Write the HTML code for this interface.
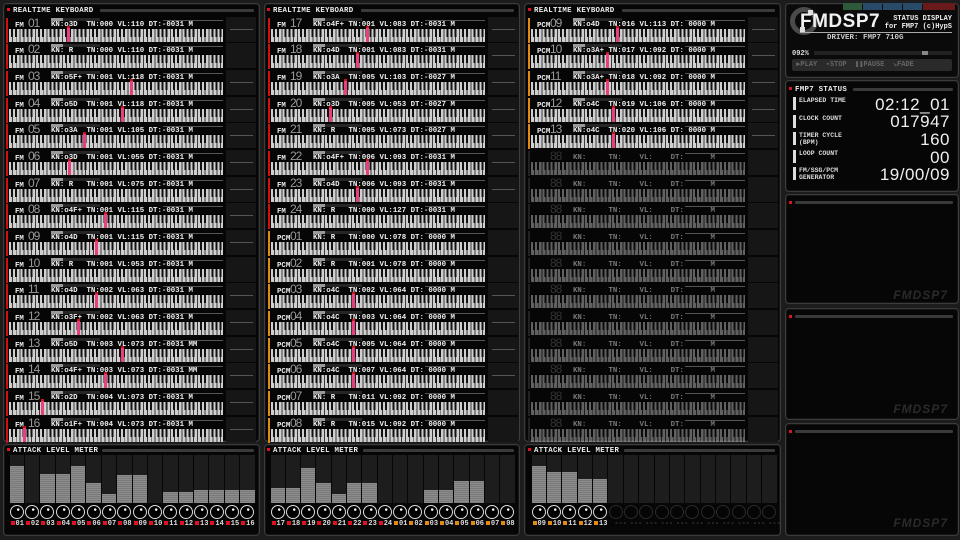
<!DOCTYPE html><html><head><meta charset="utf-8"><style>
*{margin:0;padding:0;box-sizing:border-box}
body{width:960px;height:540px;background:#1c1c1c;overflow:hidden;position:relative;font-family:"Liberation Mono",monospace;color:#eee}
.p{position:absolute;background:#060606;border:1px solid #3c3c3c;border-radius:4px;box-shadow:inset 0 0 0 1px #151515}
.tt{position:absolute;font:bold 7.4px "Liberation Mono",monospace;color:#eee;letter-spacing:.3px;white-space:nowrap}
.tt:before{content:"";display:inline-block;width:3px;height:3px;background:#e01020;margin-right:3px;vertical-align:1px}
.ln{position:absolute;height:3px;background:#3a3a3a;border-radius:1px}
.r{position:absolute;width:256px;height:26px}
.r .b{position:absolute;left:6px;top:1px;width:2px;height:25px;background:#d01010}
.r.p2 .b{background:#e08a10}
.r.d .b{background:#222}
.r .c{position:absolute;left:15px;top:5px;font:bold 7.4px "Liberation Mono",monospace;color:#eee}
.r .n{position:absolute;left:28px;top:-1px;font:12px "Liberation Sans",sans-serif;color:#999;letter-spacing:-1px}
.r .t{position:absolute;left:51px;top:4px;font:bold 7.4px/8px "Liberation Mono",monospace;color:#eee;white-space:pre}
.r .kb{position:absolute;left:9px;top:11px;width:214px;height:14px;background:
linear-gradient(#000,#000) 0 0/100% 1px no-repeat,
repeating-linear-gradient(90deg,transparent 0 2.2px,#111 2.2px 4.2px,transparent 4.2px 6px,#111 6px 8px,transparent 8px 13.6px,#111 13.6px 15.6px,transparent 15.6px 17.5px,#111 17.5px 19.5px,transparent 19.5px 21.3px,#111 21.3px 23.3px,transparent 23.3px 27px) 0 1px/100% 8px no-repeat,
repeating-linear-gradient(90deg,#cfcfcf 0 2.9px,#3a3a3a 2.9px 3.857px)}
.r.d .kb{opacity:.45}
.r.d .t,.r.d .c{color:#777}.r.d .n{color:#333}
.r .s{position:absolute;left:226px;top:0;width:30px;height:25px;background:#161616}
.r .s:after{content:"";position:absolute;left:4px;right:3px;top:12px;height:1px;background:#555}
.r.d .s:after,.r.x .s:after{display:none}
.r .m{position:absolute;left:51px;top:1px;width:49px;height:3px;background:#262626}
.r .m:before{content:"";position:absolute;left:0;top:0;width:12px;height:3px;background:#9a9a9a}
.r .lr{position:absolute;left:163px;top:3px;width:60px;height:1px;background:#555}
.r .k{position:absolute;top:9px;width:3px;height:16px;background:#e8407e;border-top:2px solid #d01010}
.am{position:absolute;display:flex;height:80px}
.am>div{flex:1;position:relative;margin:0 .5px}
.am .bb{position:absolute;left:0;right:0;top:0;height:48px;background:#1d1d1d}
.am .f{position:absolute;left:0;right:0;bottom:0;background:repeating-linear-gradient(#8c8c8c 0 1px,#7a7a7a 1px 2px)}
.am .kn{position:absolute;left:50%;margin-left:-7px;top:50px;width:14px;height:14px;border-radius:50%;border:1.5px solid #ddd;background:radial-gradient(circle at 60% 30%,#fff 0 1px,#000 1.5px)}
.am .off .kn{border-color:#2a2a2a;background:#050505}
.am .lb{position:absolute;left:1px;top:65px;font:bold 7px "Liberation Mono",monospace;color:#ddd;white-space:nowrap}
.am .lb:before{content:"";display:inline-block;width:4px;height:4px;background:#e01020;margin-right:1px}
.am .o .lb:before{background:#e08a10}
.am .off .lb{color:#444}.am .off .lb:before{background:transparent}
.rt{position:absolute;font:bold 6.5px "Liberation Mono",monospace;color:#ddd;line-height:7px}
.rv{position:absolute;right:10px;font:17px "Liberation Sans",sans-serif;color:#eee;letter-spacing:.5px}
.wb{position:absolute;left:793px;width:3px;height:13px;background:#ddd}
.wm{position:absolute;right:12px;font:bold italic 12px "Liberation Sans",sans-serif;color:#2a2a2a;letter-spacing:1px}
</style></head><body>

<div class="p" style="left:3px;top:3px;width:257px;height:439px"></div>
<div class="p" style="left:264px;top:3px;width:256px;height:439px"></div>
<div class="p" style="left:524px;top:3px;width:257px;height:439px"></div>
<div class="p" style="left:3px;top:444px;width:257px;height:92px"></div>
<div class="p" style="left:264px;top:444px;width:256px;height:92px"></div>
<div class="p" style="left:524px;top:444px;width:257px;height:92px"></div>

<div class="tt" style="left:7px;top:7px">REALTIME KEYBOARD</div><div class="ln" style="left:100px;top:9px;width:154px"></div>
<div class="tt" style="left:267px;top:7px">REALTIME KEYBOARD</div><div class="ln" style="left:361px;top:9px;width:153px"></div>
<div class="tt" style="left:528px;top:7px">REALTIME KEYBOARD</div><div class="ln" style="left:622px;top:9px;width:153px"></div>
<div class="tt" style="left:7px;top:447px">ATTACK LEVEL METER</div><div class="ln" style="left:102px;top:449px;width:152px"></div>
<div class="tt" style="left:267px;top:447px">ATTACK LEVEL METER</div><div class="ln" style="left:363px;top:449px;width:151px"></div>
<div class="tt" style="left:528px;top:447px">ATTACK LEVEL METER</div><div class="ln" style="left:624px;top:449px;width:151px"></div>

<!-- column 1 -->
<div class="r" style="left:0;top:16.7px"><i class="b"></i><i class="m"></i><i class="lr"></i><span class="c">FM</span><span class="n">01</span><span class="t">KN:o3D  TN:000 VL:110 DT:-0031 M</span><i class="kb"></i><i class="s"></i><i class="k" style="left:67px"></i></div>
<div class="r x" style="left:0;top:43.4px"><i class="b"></i><i class="m"></i><i class="lr"></i><span class="c">FM</span><span class="n">02</span><span class="t">KN: R   TN:000 VL:110 DT:-0031 M</span><i class="kb"></i><i class="s"></i></div>
<div class="r" style="left:0;top:70px"><i class="b"></i><i class="m"></i><i class="lr"></i><span class="c">FM</span><span class="n">03</span><span class="t">KN:o5F+ TN:001 VL:118 DT:-0031 M</span><i class="kb"></i><i class="s"></i><i class="k" style="left:130px"></i></div>
<div class="r" style="left:0;top:96.7px"><i class="b"></i><i class="m"></i><i class="lr"></i><span class="c">FM</span><span class="n">04</span><span class="t">KN:o5D  TN:001 VL:118 DT:-0031 M</span><i class="kb"></i><i class="s"></i><i class="k" style="left:121px"></i></div>
<div class="r" style="left:0;top:123.4px"><i class="b"></i><i class="m"></i><i class="lr"></i><span class="c">FM</span><span class="n">05</span><span class="t">KN:o3A  TN:001 VL:105 DT:-0031 M</span><i class="kb"></i><i class="s"></i><i class="k" style="left:83px"></i></div>
<div class="r" style="left:0;top:150px"><i class="b"></i><i class="m"></i><i class="lr"></i><span class="c">FM</span><span class="n">06</span><span class="t">KN:o3D  TN:001 VL:055 DT:-0031 M</span><i class="kb"></i><i class="s"></i><i class="k" style="left:68px"></i></div>
<div class="r" style="left:0;top:176.7px"><i class="b"></i><i class="m"></i><i class="lr"></i><span class="c">FM</span><span class="n">07</span><span class="t">KN: R   TN:001 VL:075 DT:-0031 M</span><i class="kb"></i><i class="s"></i></div>
<div class="r" style="left:0;top:203.4px"><i class="b"></i><i class="m"></i><i class="lr"></i><span class="c">FM</span><span class="n">08</span><span class="t">KN:o4F+ TN:001 VL:115 DT:-0031 M</span><i class="kb"></i><i class="s"></i><i class="k" style="left:104px"></i></div>
<div class="r" style="left:0;top:230px"><i class="b"></i><i class="m"></i><i class="lr"></i><span class="c">FM</span><span class="n">09</span><span class="t">KN:o4D  TN:001 VL:115 DT:-0031 M</span><i class="kb"></i><i class="s"></i><i class="k" style="left:95px"></i></div>
<div class="r x" style="left:0;top:256.7px"><i class="b"></i><i class="m"></i><i class="lr"></i><span class="c">FM</span><span class="n">10</span><span class="t">KN: R   TN:001 VL:053 DT:-0031 M</span><i class="kb"></i><i class="s"></i></div>
<div class="r" style="left:0;top:283.4px"><i class="b"></i><i class="m"></i><i class="lr"></i><span class="c">FM</span><span class="n">11</span><span class="t">KN:o4D  TN:002 VL:063 DT:-0031 M</span><i class="kb"></i><i class="s"></i><i class="k" style="left:95px"></i></div>
<div class="r" style="left:0;top:310px"><i class="b"></i><i class="m"></i><i class="lr"></i><span class="c">FM</span><span class="n">12</span><span class="t">KN:o3F+ TN:002 VL:063 DT:-0031 M</span><i class="kb"></i><i class="s"></i><i class="k" style="left:77px"></i></div>
<div class="r" style="left:0;top:336.7px"><i class="b"></i><i class="m"></i><i class="lr"></i><span class="c">FM</span><span class="n">13</span><span class="t">KN:o5D  TN:003 VL:073 DT:-0031 MM</span><i class="kb"></i><i class="s"></i><i class="k" style="left:121px"></i></div>
<div class="r" style="left:0;top:363.4px"><i class="b"></i><i class="m"></i><i class="lr"></i><span class="c">FM</span><span class="n">14</span><span class="t">KN:o4F+ TN:003 VL:073 DT:-0031 MM</span><i class="kb"></i><i class="s"></i><i class="k" style="left:104px"></i></div>
<div class="r" style="left:0;top:390px"><i class="b"></i><i class="m"></i><i class="lr"></i><span class="c">FM</span><span class="n">15</span><span class="t">KN:o2D  TN:004 VL:073 DT:-0031 M</span><i class="kb"></i><i class="s"></i><i class="k" style="left:41px"></i></div>
<div class="r" style="left:0;top:416.7px"><i class="b"></i><i class="m"></i><i class="lr"></i><span class="c">FM</span><span class="n">16</span><span class="t">KN:o1F+ TN:004 VL:073 DT:-0031 M</span><i class="kb"></i><i class="s"></i><i class="k" style="left:23px"></i></div>

<!-- column 2 -->
<div class="r" style="left:262px;top:16.7px"><i class="b"></i><i class="m"></i><i class="lr"></i><span class="c">FM</span><span class="n">17</span><span class="t">KN:o4F+ TN:001 VL:083 DT:-0031 M</span><i class="kb"></i><i class="s"></i><i class="k" style="left:104px"></i></div>
<div class="r" style="left:262px;top:43.4px"><i class="b"></i><i class="m"></i><i class="lr"></i><span class="c">FM</span><span class="n">18</span><span class="t">KN:o4D  TN:001 VL:083 DT:-0031 M</span><i class="kb"></i><i class="s"></i><i class="k" style="left:94px"></i></div>
<div class="r" style="left:262px;top:70px"><i class="b"></i><i class="m"></i><i class="lr"></i><span class="c">FM</span><span class="n">19</span><span class="t">KN:o3A  TN:005 VL:103 DT:-0027 M</span><i class="kb"></i><i class="s"></i><i class="k" style="left:82px"></i></div>
<div class="r" style="left:262px;top:96.7px"><i class="b"></i><i class="m"></i><i class="lr"></i><span class="c">FM</span><span class="n">20</span><span class="t">KN:o3D  TN:005 VL:053 DT:-0027 M</span><i class="kb"></i><i class="s"></i><i class="k" style="left:67px"></i></div>
<div class="r" style="left:262px;top:123.4px"><i class="b"></i><i class="m"></i><i class="lr"></i><span class="c">FM</span><span class="n">21</span><span class="t">KN: R   TN:005 VL:073 DT:-0027 M</span><i class="kb"></i><i class="s"></i></div>
<div class="r" style="left:262px;top:150px"><i class="b"></i><i class="m"></i><i class="lr"></i><span class="c">FM</span><span class="n">22</span><span class="t">KN:o4F+ TN:006 VL:093 DT:-0031 M</span><i class="kb"></i><i class="s"></i><i class="k" style="left:104px"></i></div>
<div class="r" style="left:262px;top:176.7px"><i class="b"></i><i class="m"></i><i class="lr"></i><span class="c">FM</span><span class="n">23</span><span class="t">KN:o4D  TN:006 VL:093 DT:-0031 M</span><i class="kb"></i><i class="s"></i><i class="k" style="left:94px"></i></div>
<div class="r x" style="left:262px;top:203.4px"><i class="b"></i><i class="m"></i><i class="lr"></i><span class="c">FM</span><span class="n">24</span><span class="t">KN: R   TN:000 VL:127 DT:-0031 M</span><i class="kb"></i><i class="s"></i></div>
<div class="r p2 x" style="left:262px;top:230px"><i class="b"></i><i class="m"></i><i class="lr"></i><span class="c">PCM</span><span class="n">01</span><span class="t">KN: R   TN:000 VL:078 DT: 0000 M</span><i class="kb"></i><i class="s"></i></div>
<div class="r p2 x" style="left:262px;top:256.7px"><i class="b"></i><i class="m"></i><i class="lr"></i><span class="c">PCM</span><span class="n">02</span><span class="t">KN: R   TN:001 VL:078 DT: 0000 M</span><i class="kb"></i><i class="s"></i></div>
<div class="r p2" style="left:262px;top:283.4px"><i class="b"></i><i class="m"></i><i class="lr"></i><span class="c">PCM</span><span class="n">03</span><span class="t">KN:o4C  TN:002 VL:064 DT: 0000 M</span><i class="kb"></i><i class="s"></i><i class="k" style="left:90px"></i></div>
<div class="r p2" style="left:262px;top:310px"><i class="b"></i><i class="m"></i><i class="lr"></i><span class="c">PCM</span><span class="n">04</span><span class="t">KN:o4C  TN:003 VL:064 DT: 0000 M</span><i class="kb"></i><i class="s"></i><i class="k" style="left:90px"></i></div>
<div class="r p2" style="left:262px;top:336.7px"><i class="b"></i><i class="m"></i><i class="lr"></i><span class="c">PCM</span><span class="n">05</span><span class="t">KN:o4C  TN:005 VL:064 DT: 0000 M</span><i class="kb"></i><i class="s"></i><i class="k" style="left:90px"></i></div>
<div class="r p2" style="left:262px;top:363.4px"><i class="b"></i><i class="m"></i><i class="lr"></i><span class="c">PCM</span><span class="n">06</span><span class="t">KN:o4C  TN:007 VL:064 DT: 0000 M</span><i class="kb"></i><i class="s"></i><i class="k" style="left:90px"></i></div>
<div class="r p2 x" style="left:262px;top:390px"><i class="b"></i><i class="m"></i><i class="lr"></i><span class="c">PCM</span><span class="n">07</span><span class="t">KN: R   TN:011 VL:092 DT: 0000 M</span><i class="kb"></i><i class="s"></i></div>
<div class="r p2 x" style="left:262px;top:416.7px"><i class="b"></i><i class="m"></i><i class="lr"></i><span class="c">PCM</span><span class="n">08</span><span class="t">KN: R   TN:015 VL:092 DT: 0000 M</span><i class="kb"></i><i class="s"></i></div>

<!-- column 3 -->
<div class="r p2" style="left:522px;top:16.7px"><i class="b"></i><i class="m"></i><i class="lr"></i><span class="c">PCM</span><span class="n">09</span><span class="t">KN:o4D  TN:016 VL:113 DT: 0000 M</span><i class="kb"></i><i class="s"></i><i class="k" style="left:94px"></i></div>
<div class="r p2" style="left:522px;top:43.4px"><i class="b"></i><i class="m"></i><i class="lr"></i><span class="c">PCM</span><span class="n">10</span><span class="t">KN:o3A+ TN:017 VL:092 DT: 0000 M</span><i class="kb"></i><i class="s"></i><i class="k" style="left:84px"></i></div>
<div class="r p2" style="left:522px;top:70px"><i class="b"></i><i class="m"></i><i class="lr"></i><span class="c">PCM</span><span class="n">11</span><span class="t">KN:o3A+ TN:018 VL:092 DT: 0000 M</span><i class="kb"></i><i class="s"></i><i class="k" style="left:84px"></i></div>
<div class="r p2" style="left:522px;top:96.7px"><i class="b"></i><i class="m"></i><i class="lr"></i><span class="c">PCM</span><span class="n">12</span><span class="t">KN:o4C  TN:019 VL:106 DT: 0000 M</span><i class="kb"></i><i class="s"></i><i class="k" style="left:90px"></i></div>
<div class="r p2" style="left:522px;top:123.4px"><i class="b"></i><i class="m"></i><i class="lr"></i><span class="c">PCM</span><span class="n">13</span><span class="t">KN:o4C  TN:020 VL:106 DT: 0000 M</span><i class="kb"></i><i class="s"></i><i class="k" style="left:90px"></i></div>
<div class="r d" style="left:522px;top:150px"><i class="b"></i><i class="lr"></i><span class="n">88</span><span class="t">KN:     TN:    VL:    DT:      M</span><i class="kb"></i><i class="s"></i></div>
<div class="r d" style="left:522px;top:176.7px"><i class="b"></i><i class="lr"></i><span class="n">88</span><span class="t">KN:     TN:    VL:    DT:      M</span><i class="kb"></i><i class="s"></i></div>
<div class="r d" style="left:522px;top:203.4px"><i class="b"></i><i class="lr"></i><span class="n">88</span><span class="t">KN:     TN:    VL:    DT:      M</span><i class="kb"></i><i class="s"></i></div>
<div class="r d" style="left:522px;top:230px"><i class="b"></i><i class="lr"></i><span class="n">88</span><span class="t">KN:     TN:    VL:    DT:      M</span><i class="kb"></i><i class="s"></i></div>
<div class="r d" style="left:522px;top:256.7px"><i class="b"></i><i class="lr"></i><span class="n">88</span><span class="t">KN:     TN:    VL:    DT:      M</span><i class="kb"></i><i class="s"></i></div>
<div class="r d" style="left:522px;top:283.4px"><i class="b"></i><i class="lr"></i><span class="n">88</span><span class="t">KN:     TN:    VL:    DT:      M</span><i class="kb"></i><i class="s"></i></div>
<div class="r d" style="left:522px;top:310px"><i class="b"></i><i class="lr"></i><span class="n">88</span><span class="t">KN:     TN:    VL:    DT:      M</span><i class="kb"></i><i class="s"></i></div>
<div class="r d" style="left:522px;top:336.7px"><i class="b"></i><i class="lr"></i><span class="n">88</span><span class="t">KN:     TN:    VL:    DT:      M</span><i class="kb"></i><i class="s"></i></div>
<div class="r d" style="left:522px;top:363.4px"><i class="b"></i><i class="lr"></i><span class="n">88</span><span class="t">KN:     TN:    VL:    DT:      M</span><i class="kb"></i><i class="s"></i></div>
<div class="r d" style="left:522px;top:390px"><i class="b"></i><i class="lr"></i><span class="n">88</span><span class="t">KN:     TN:    VL:    DT:      M</span><i class="kb"></i><i class="s"></i></div>
<div class="r d" style="left:522px;top:416.7px"><i class="b"></i><i class="lr"></i><span class="n">88</span><span class="t">KN:     TN:    VL:    DT:      M</span><i class="kb"></i><i class="s"></i></div>

<!-- attack meters -->
<div class="am" style="left:9px;top:455px;width:246px">
<div><i class="bb"><i class="f" style="height:37px"></i></i><i class="kn"></i><span class="lb">01</span></div>
<div><i class="bb"></i><i class="kn"></i><span class="lb">02</span></div>
<div><i class="bb"><i class="f" style="height:29px"></i></i><i class="kn"></i><span class="lb">03</span></div>
<div><i class="bb"><i class="f" style="height:29px"></i></i><i class="kn"></i><span class="lb">04</span></div>
<div><i class="bb"><i class="f" style="height:37px"></i></i><i class="kn"></i><span class="lb">05</span></div>
<div><i class="bb"><i class="f" style="height:20px"></i></i><i class="kn"></i><span class="lb">06</span></div>
<div><i class="bb"><i class="f" style="height:9px"></i></i><i class="kn"></i><span class="lb">07</span></div>
<div><i class="bb"><i class="f" style="height:28px"></i></i><i class="kn"></i><span class="lb">08</span></div>
<div><i class="bb"><i class="f" style="height:28px"></i></i><i class="kn"></i><span class="lb">09</span></div>
<div><i class="bb"></i><i class="kn"></i><span class="lb">10</span></div>
<div><i class="bb"><i class="f" style="height:11px"></i></i><i class="kn"></i><span class="lb">11</span></div>
<div><i class="bb"><i class="f" style="height:11px"></i></i><i class="kn"></i><span class="lb">12</span></div>
<div><i class="bb"><i class="f" style="height:13px"></i></i><i class="kn"></i><span class="lb">13</span></div>
<div><i class="bb"><i class="f" style="height:13px"></i></i><i class="kn"></i><span class="lb">14</span></div>
<div><i class="bb"><i class="f" style="height:13px"></i></i><i class="kn"></i><span class="lb">15</span></div>
<div><i class="bb"><i class="f" style="height:13px"></i></i><i class="kn"></i><span class="lb">16</span></div>
</div>
<div class="am" style="left:270px;top:455px;width:245px">
<div><i class="bb"><i class="f" style="height:15px"></i></i><i class="kn"></i><span class="lb">17</span></div>
<div><i class="bb"><i class="f" style="height:15px"></i></i><i class="kn"></i><span class="lb">18</span></div>
<div><i class="bb"><i class="f" style="height:35px"></i></i><i class="kn"></i><span class="lb">19</span></div>
<div><i class="bb"><i class="f" style="height:20px"></i></i><i class="kn"></i><span class="lb">20</span></div>
<div><i class="bb"><i class="f" style="height:9px"></i></i><i class="kn"></i><span class="lb">21</span></div>
<div><i class="bb"><i class="f" style="height:20px"></i></i><i class="kn"></i><span class="lb">22</span></div>
<div><i class="bb"><i class="f" style="height:20px"></i></i><i class="kn"></i><span class="lb">23</span></div>
<div><i class="bb"></i><i class="kn"></i><span class="lb">24</span></div>
<div class="o"><i class="bb"></i><i class="kn"></i><span class="lb">01</span></div>
<div class="o"><i class="bb"></i><i class="kn"></i><span class="lb">02</span></div>
<div class="o"><i class="bb"><i class="f" style="height:13px"></i></i><i class="kn"></i><span class="lb">03</span></div>
<div class="o"><i class="bb"><i class="f" style="height:13px"></i></i><i class="kn"></i><span class="lb">04</span></div>
<div class="o"><i class="bb"><i class="f" style="height:22px"></i></i><i class="kn"></i><span class="lb">05</span></div>
<div class="o"><i class="bb"><i class="f" style="height:22px"></i></i><i class="kn"></i><span class="lb">06</span></div>
<div class="o"><i class="bb"></i><i class="kn"></i><span class="lb">07</span></div>
<div class="o"><i class="bb"></i><i class="kn"></i><span class="lb">08</span></div>
</div>
<div class="am" style="left:531px;top:455px;width:246px">
<div class="o"><i class="bb"><i class="f" style="height:37px"></i></i><i class="kn"></i><span class="lb">09</span></div>
<div class="o"><i class="bb"><i class="f" style="height:31px"></i></i><i class="kn"></i><span class="lb">10</span></div>
<div class="o"><i class="bb"><i class="f" style="height:31px"></i></i><i class="kn"></i><span class="lb">11</span></div>
<div class="o"><i class="bb"><i class="f" style="height:24px"></i></i><i class="kn"></i><span class="lb">12</span></div>
<div class="o"><i class="bb"><i class="f" style="height:24px"></i></i><i class="kn"></i><span class="lb">13</span></div>
<div class="off"><i class="bb"></i><i class="kn"></i><span class="lb">---</span></div>
<div class="off"><i class="bb"></i><i class="kn"></i><span class="lb">---</span></div>
<div class="off"><i class="bb"></i><i class="kn"></i><span class="lb">---</span></div>
<div class="off"><i class="bb"></i><i class="kn"></i><span class="lb">---</span></div>
<div class="off"><i class="bb"></i><i class="kn"></i><span class="lb">---</span></div>
<div class="off"><i class="bb"></i><i class="kn"></i><span class="lb">---</span></div>
<div class="off"><i class="bb"></i><i class="kn"></i><span class="lb">---</span></div>
<div class="off"><i class="bb"></i><i class="kn"></i><span class="lb">---</span></div>
<div class="off"><i class="bb"></i><i class="kn"></i><span class="lb">---</span></div>
<div class="off"><i class="bb"></i><i class="kn"></i><span class="lb">---</span></div>
<div class="off"><i class="bb"></i><i class="kn"></i><span class="lb">---</span></div>
</div>

<!-- right side -->
<div class="p" style="left:785px;top:3px;width:174px;height:75px;background:#0a0a0a"></div>
<div style="position:absolute;left:843px;top:3px;width:19px;height:7px;background:#2d5a3a"></div>
<div style="position:absolute;left:863px;top:3px;width:19px;height:7px;background:#2a4a6a"></div>
<div style="position:absolute;left:883px;top:3px;width:19px;height:7px;background:#2a4a6a"></div>
<div style="position:absolute;left:903px;top:3px;width:19px;height:7px;background:#2a4a6a"></div>
<div style="position:absolute;left:923px;top:3px;width:32px;height:7px;background:#6a1a1a"></div>
<div style="position:absolute;left:790px;top:7px;width:28px;height:28px;border-radius:50%;border:5px solid #4a4a4a"></div>
<div style="position:absolute;left:808px;top:10px;width:5px;height:5px;background:#ddd"></div>
<div style="position:absolute;left:800px;top:27px;width:5px;height:5px;background:#ddd"></div>
<div style="position:absolute;left:800px;top:11px;font:bold 19px 'Liberation Sans',sans-serif;color:#f2f2f2;letter-spacing:0.5px">FMDSP7</div>
<div style="position:absolute;right:8px;top:15px;font:bold 7px 'Liberation Mono',monospace;color:#eee;line-height:8px;text-align:right;white-space:nowrap">STATUS DISPLAY<br>for FMP7 (c)HypS</div>
<div style="position:absolute;left:800px;top:32px;width:152px;height:1px;background:#aaa"></div>
<div style="position:absolute;left:827px;top:34px;font:bold 7.5px 'Liberation Mono',monospace;color:#ccc">DRIVER: FMP7 710G</div>
<div style="position:absolute;left:792px;top:50px;font:bold 7px 'Liberation Mono',monospace;color:#ddd">092%</div>
<div style="position:absolute;left:814px;top:51px;width:138px;height:4px;background:#222"></div>
<div style="position:absolute;left:922px;top:51px;width:6px;height:4px;background:#888"></div>
<div style="position:absolute;left:792px;top:59px;width:160px;height:12px;background:#2a2a2a;border-radius:2px;font:bold 7px/12px 'Liberation Mono',monospace;color:#666;word-spacing:0">&nbsp;▶PLAY &nbsp;▪STOP &nbsp;❚❚PAUSE &nbsp;↘FADE</div>

<div class="p" style="left:785px;top:80px;width:174px;height:112px"></div>
<div class="tt" style="left:789px;top:86px">FMP7 STATUS</div><div class="ln" style="left:853px;top:88px;width:100px"></div>
<i class="wb" style="top:97px"></i><div class="rt" style="left:799px;top:97px">ELAPSED TIME</div><div class="rv" style="top:95px">02:12_01</div>
<i class="wb" style="top:115px"></i><div class="rt" style="left:799px;top:115px">CLOCK COUNT</div><div class="rv" style="top:112px">017947</div>
<i class="wb" style="top:132px"></i><div class="rt" style="left:799px;top:132px">TIMER CYCLE<br>(BPM)</div><div class="rv" style="top:130px">160</div>
<i class="wb" style="top:150px"></i><div class="rt" style="left:799px;top:150px">LOOP COUNT</div><div class="rv" style="top:148px">00</div>
<i class="wb" style="top:167px"></i><div class="rt" style="left:799px;top:167px">FM/SSG/PCM<br>GENERATOR</div><div class="rv" style="top:165px">19/00/09</div>

<div class="p" style="left:785px;top:194px;width:174px;height:110px"></div>
<div class="tt" style="left:789px;top:200px"></div><div class="ln" style="left:795px;top:201px;width:158px"></div>
<div class="wm" style="top:288px">FMDSP7</div>
<div class="p" style="left:785px;top:308px;width:174px;height:112px"></div>
<div class="tt" style="left:789px;top:314px"></div><div class="ln" style="left:795px;top:315px;width:158px"></div>
<div class="wm" style="top:402px">FMDSP7</div>
<div class="p" style="left:785px;top:423px;width:174px;height:113px"></div>
<div class="tt" style="left:789px;top:429px"></div><div class="ln" style="left:795px;top:430px;width:158px"></div>
<div class="wm" style="top:516px">FMDSP7</div>
</body></html>
